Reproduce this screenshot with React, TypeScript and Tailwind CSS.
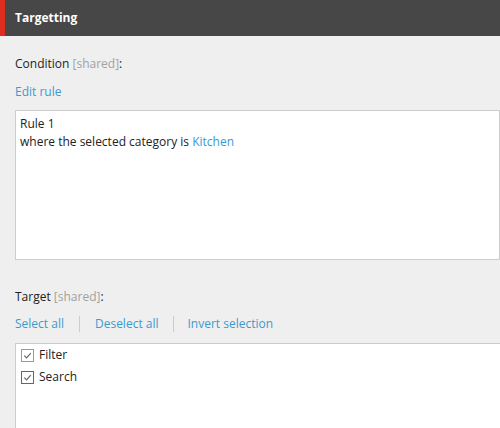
import React from 'react';

const font = { fontFamily: '"Open Sans", "Noto Sans", sans-serif' };

const Check = ({ light }: { light?: boolean }) => (
  <span
    className={
      'inline-flex h-[13px] w-[13px] items-center justify-center border bg-white mr-[5px] ' +
      (light ? 'border-[#999]' : 'border-[#666]')
    }
  >
    <svg viewBox="0 0 12 12" className="h-[11px] w-[11px]">
      <path d="M2.5 6.2 L5 8.6 L9.6 3.4" fill="none" stroke="#666" strokeWidth="1.3" />
    </svg>
  </span>
);

export default function App() {
  return (
    <div className="min-h-[428px] bg-[#efefef] text-[12px] text-[#222]" style={font}>
      {/* Panel header */}
      <div className="flex h-[36px] items-center border-l-[5px] border-[#dc2d1f] bg-[#474747] pl-[10px]">
        <span className="text-[12px] font-bold text-white">Targetting</span>
      </div>

      <div className="pl-[15px] pt-[19px]">
        <div className="leading-[18px]">
          Condition <span className="text-[#a2a2a2]">[shared]</span>:
        </div>
        <div className="mt-[10px] leading-[18px] text-[#3a9ad0]">Edit rule</div>

        <div className="mt-[9px] h-[150px] border border-[#cccccc] bg-white px-[4px] pt-[4px] leading-[18px]">
          <div>Rule 1</div>
          <div>
            where the selected category is <span className="text-[#3a9ad0]">Kitchen</span>
          </div>
        </div>

        <div className="mt-[28px] leading-[18px]">
          Target <span className="text-[#a2a2a2]">[shared]</span>:
        </div>
        <div className="mt-[9px] flex items-center leading-[18px] text-[#3a9ad0]">
          <span>Select all</span>
          <span className="mx-[15px] h-[16px] w-px bg-[#cccccc]" />
          <span>Deselect all</span>
          <span className="mx-[14px] h-[16px] w-px bg-[#cccccc]" />
          <span>Invert selection</span>
        </div>

        <div className="mt-[10px] h-[100px] border border-[#cccccc] border-r-0 border-b-0 bg-white px-[5px]">
          <label className="flex h-[22px] items-center">
            <Check light />
            <span>Filter</span>
          </label>
          <label className="flex h-[22px] items-center">
            <Check />
            <span>Search</span>
          </label>
        </div>
      </div>
    </div>
  );
}
